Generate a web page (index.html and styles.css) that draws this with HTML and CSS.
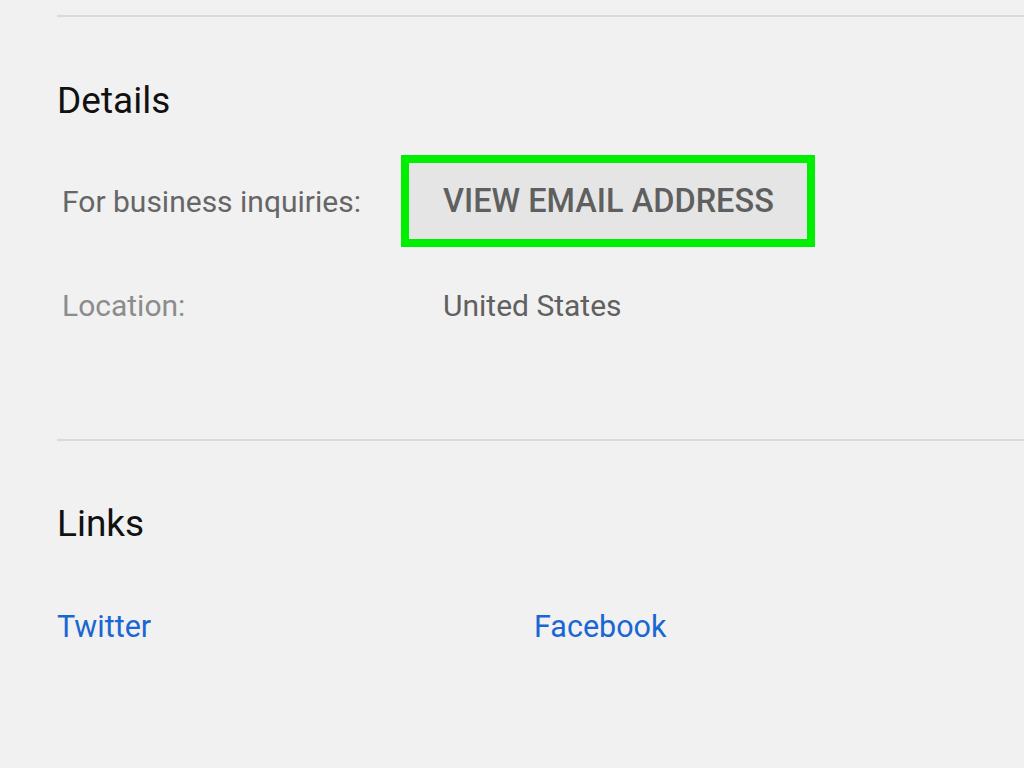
FILE: index.html
```html
<!DOCTYPE html>
<html>
<head>
	<meta charset="utf8">
	<meta name="viewport" content="width=device-width">
	<title>About</title>
	<link rel="stylesheet" href="styles.css">
</head>
<body>
	<div class="about">
		<section class="block details">
			<h2>Details</h2>
			<div class="row">
				<span class="label">For business inquiries:</span>
				<button class="email-btn" type="button">VIEW EMAIL ADDRESS</button>
			</div>
			<div class="row">
				<span class="label faint">Location:</span>
				<span class="value">United States</span>
			</div>
		</section>

		<section class="block links">
			<h2>Links</h2>
			<div class="link-list">
				<a href="#">Twitter</a>
				<a href="#">Facebook</a>
			</div>
		</section>
	</div>
</body>
</html>
```

FILE: styles.css
```css
html, body {
	margin: 0;
	padding: 0;
	background: #f1f1f1;
	font-family: Roboto, "Liberation Sans", sans-serif;
}
.about {
	padding-left: 57px;
	padding-top: 15px;
}
.block {
	border-top: 2px solid #dadada;
}
h2 {
	margin: 0;
	font-weight: 400;
	font-size: 37px;
	color: #111;
	line-height: 1;
}

/* Details */
.details {
	padding-top: 65px;
	height: 424px;
	box-sizing: border-box;
}
.details .row {
	display: grid;
	grid-template-columns: 339px auto;
	align-items: center;
	padding-left: 5px;
}
.details .row:first-of-type {
	margin-top: 36px;
}
.details .row + .row {
	margin-top: 41px;
}
.label {
	font-size: 30px;
	color: #666;
}
.label.faint {
	color: #8c8c8c;
}
.value {
	font-size: 30px;
	color: #606060;
	padding-left: 42px;
}
.email-btn {
	justify-self: start;
	font-family: inherit;
	font-size: 32.5px;
	font-weight: 500;
	color: #5f5f5f;
	background: #e5e5e5;
	border: 8px solid #00ee00;
	padding: 0 33px 0 34px;
	height: 92px;
	cursor: pointer;
}

/* Links */
.links {
	padding-top: 64px;
}
.link-list {
	display: grid;
	grid-template-columns: 477px auto;
	margin-top: 67px;
}
.link-list a {
	font-size: 30.5px;
	color: #1a66d2;
	text-decoration: none;
	justify-self: start;
}
```
